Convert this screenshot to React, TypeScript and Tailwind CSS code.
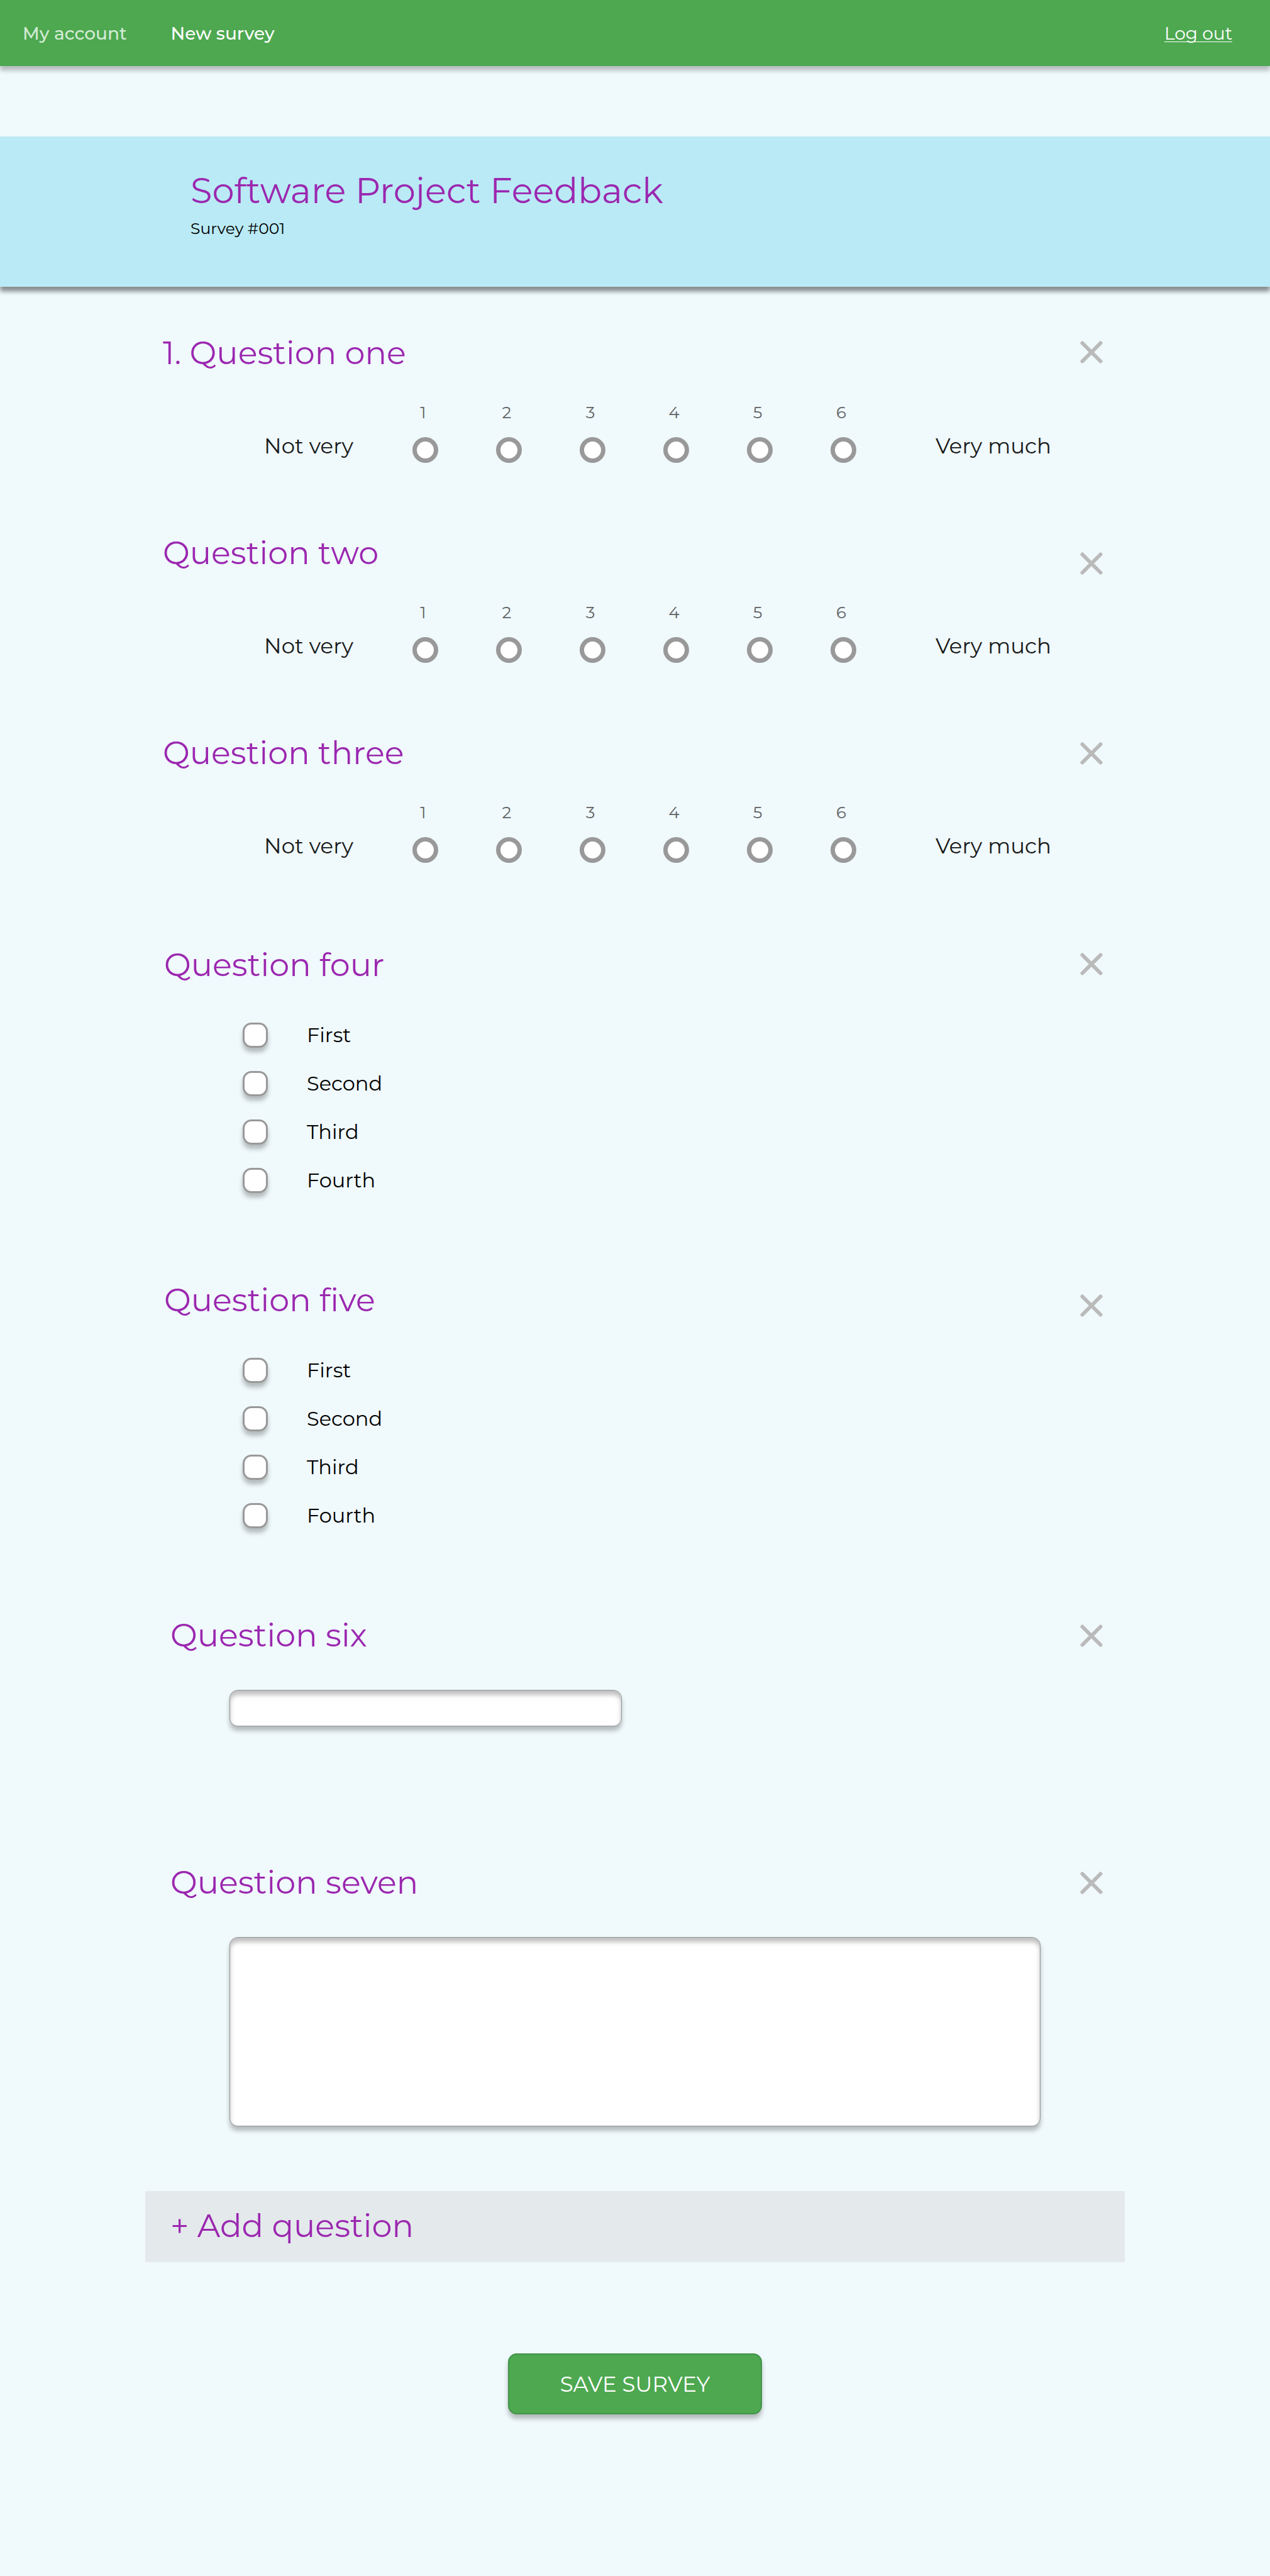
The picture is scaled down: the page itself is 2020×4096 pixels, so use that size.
import React from "react";

type Question = {
  id: string;
  title: string;
  kind: "scale" | "choices" | "line" | "paragraph";
  spacing: string;
  indent: string;
  removeAlign: string;
};

const questions: Question[] = [
  { id: "q1", title: "1. Question one", kind: "scale", spacing: "mb-[110px]", indent: "pl-7", removeAlign: "mt-3.5" },
  { id: "q2", title: "Question two", kind: "scale", spacing: "mb-[110px]", indent: "pl-7", removeAlign: "mt-8" },
  { id: "q3", title: "Question three", kind: "scale", spacing: "mb-[129px]", indent: "pl-7", removeAlign: "mt-4" },
  { id: "q4", title: "Question four", kind: "choices", spacing: "mb-[137px]", indent: "pl-[30px]", removeAlign: "mt-3.5" },
  { id: "q5", title: "Question five", kind: "choices", spacing: "mb-[137px]", indent: "pl-[30px]", removeAlign: "mt-6" },
  { id: "q6", title: "Question six", kind: "line", spacing: "mb-[215px]", indent: "pl-10", removeAlign: "mt-4" },
  { id: "q7", title: "Question seven", kind: "paragraph", spacing: "mb-[103px]", indent: "pl-10", removeAlign: "mt-4" },
];

const steps = ["1", "2", "3", "4", "5", "6"];
const choices = ["First", "Second", "Third", "Fourth"];

const fieldStyle =
  "block rounded-[13px] border border-[#939595] bg-white px-4 text-[32px] shadow-[0_7px_7px_rgba(0,0,0,0.25),inset_0_7px_7px_rgba(0,0,0,0.25)] outline-none";

function CloseIcon() {
  return (
    <svg viewBox="0 0 36 36" className="size-9" fill="none" stroke="#bababa" strokeWidth="6" strokeLinecap="round" aria-hidden="true">
      <path d="M3.5 3.5 32.5 32.5M32.5 3.5 3.5 32.5" />
    </svg>
  );
}

function Scale({ id }: { id: string }) {
  return (
    <div className="mt-[46px] grid grid-cols-[190px_repeat(6,minmax(0,133px))_1fr] items-end pl-[189px]">
      <span className="pb-[7px] text-[34px] leading-10 text-[#181919]">Not very</span>
      {steps.map((step) => (
        <label key={step} className="flex flex-col items-center gap-[21px]">
          <span className="pr-[7px] text-[26px] leading-9 text-[#606465]">{step}</span>
          <input type="radio" name={id} value={step} className="size-[41px] appearance-none rounded-full border-[7px] border-[#999999] bg-white checked:bg-[#9b27af]" />
        </label>
      ))}
      <span className="pb-[7px] pl-20 text-[34px] leading-10 text-[#181919]">Very much</span>
    </div>
  );
}

function Choices({ id }: { id: string }) {
  return (
    <div className="mt-[61px] flex flex-col items-start gap-[37px] pl-[155px]">
      {choices.map((choice) => (
        <label key={choice} className="flex items-center gap-[62px] text-[32px] leading-10 text-black">
          <input
            type="checkbox"
            name={id}
            value={choice}
            className="size-10 appearance-none rounded-[14px] border-[3px] border-[#999999] bg-white shadow-[0_7px_7px_rgba(0,0,0,0.25)] checked:bg-[#9b27af]"
          />
          {choice}
        </label>
      ))}
    </div>
  );
}

function QuestionBlock({ question }: { question: Question }) {
  const { id, title, kind, spacing, indent, removeAlign } = question;
  return (
    <section className={spacing} aria-labelledby={id}>
      <div className={`flex h-16 items-start justify-between pr-[35px] ${indent}`}>
        <h2 id={id} className="text-[51px] leading-[66px] text-[#9b27af]">{title}</h2>
        <button type="button" aria-label={`Remove ${title}`} className={removeAlign}>
          <CloseIcon />
        </button>
      </div>
      {kind === "scale" && <Scale id={`${id}-scale`} />}
      {kind === "choices" && <Choices id={`${id}-choice`} />}
      {kind === "line" && (
        <div className="mt-14 px-[134px]">
          <input type="text" aria-labelledby={id} className={`h-[58px] w-full max-w-[624px] ${fieldStyle}`} />
        </div>
      )}
      {kind === "paragraph" && (
        <div className="mt-14 px-[134px]">
          <textarea aria-labelledby={id} className={`h-[301px] w-full resize-none ${fieldStyle}`} />
        </div>
      )}
    </section>
  );
}

export default function App() {
  return (
    <div className="min-h-screen bg-[#f0f9fc] font-[Montserrat,Inter,sans-serif]">
      <header className="flex h-[105px] items-center justify-between bg-[#4da850] pr-[60px] pl-9 text-[28px] leading-9 text-white shadow-[0_7px_7px_rgba(0,0,0,0.25)]">
        <nav className="flex gap-[70px] font-medium">
          <a href="#account" className="text-[#d5ecd6]">My account</a>
          <a href="#new">New survey</a>
        </nav>
        <a href="#logout" className="underline decoration-1 underline-offset-[3px] [text-decoration-skip-ink:none]">Log out</a>
      </header>

      <div className="mt-28 h-[239px] bg-[#baeaf5] px-[303px] pt-[52px] shadow-[0_7px_7px_rgba(0,0,0,0.25),0_7px_7px_rgba(0,0,0,0.25)]">
        <h1 className="text-[56px] leading-[68px] text-[#9b27af]">Software Project Feedback</h1>
        <p className="mt-2 text-[25px] leading-9 text-black">Survey #001</p>
      </div>

      <main className="mx-auto w-full max-w-[1558px] pt-[72px] pb-[257px]">
        <form>
          {questions.map((question) => (
            <QuestionBlock key={question.id} question={question} />
          ))}
          <button type="button" className="block h-[113px] w-full bg-[#e4e9ec] px-10 pb-1 text-left text-[51px] leading-[66px] text-[#9b27af]">
            + Add question
          </button>
          <button
            type="submit"
            className="mx-auto mt-[145px] block h-[97px] w-[404px] rounded-[14px] border-2 border-[#44934a] bg-[#4da850] text-[34px] leading-10 text-white shadow-[0_7px_7px_rgba(0,0,0,0.25)]"
          >
            SAVE SURVEY
          </button>
        </form>
      </main>
    </div>
  );
}
